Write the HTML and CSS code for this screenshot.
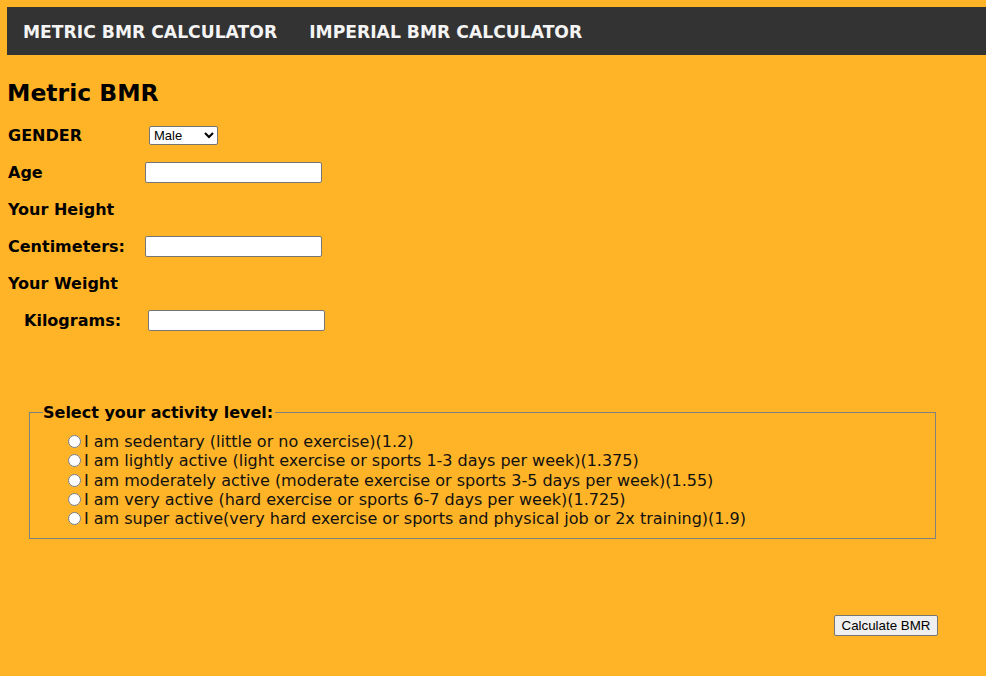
FILE: index.html
```html
<!DOCTYPE html>
<html>
<head>
<meta charset="utf-8">
<title>Metric BMR</title>
<link rel="stylesheet" href="styles.css">
</head>
<body>
<nav class="topnav">
  <a class="navlink" href="#">METRIC BMR CALCULATOR</a>
  <a class="navlink" href="#">IMPERIAL BMR CALCULATOR</a>
</nav>
<h2 class="title">Metric BMR</h2>
<form class="bmr-form">
  <div class="row">
    <label class="lbl">GENDER</label>
    <select class="sel"><option>Male</option><option>Female</option></select>
  </div>
  <div class="row">
    <label class="lbl">Age</label>
    <input class="txt" type="text">
  </div>
  <div class="row">
    <label class="lbl">Your Height</label>
  </div>
  <div class="row">
    <label class="lbl">Centimeters:</label>
    <input class="txt" type="text">
  </div>
  <div class="row">
    <label class="lbl">Your Weight</label>
  </div>
  <div class="row row-kg">
    <label class="lbl lbl-kg">Kilograms:</label>
    <input class="txt txt-kg" type="text">
  </div>

  <fieldset class="activity">
    <legend class="legend">Select your activity level:</legend>
    <div class="options">
      <label class="opt"><input type="radio" name="act" class="radio">I am sedentary (little or no exercise)(1.2)</label>
      <label class="opt"><input type="radio" name="act" class="radio">I am lightly active (light exercise or sports 1-3 days per week)(1.375)</label>
      <label class="opt"><input type="radio" name="act" class="radio">I am moderately active (moderate exercise or sports 3-5 days per week)(1.55)</label>
      <label class="opt"><input type="radio" name="act" class="radio">I am very active (hard exercise or sports 6-7 days per week)(1.725)</label>
      <label class="opt"><input type="radio" name="act" class="radio">I am super active(very hard exercise or sports and physical job or 2x training)(1.9)</label>
    </div>
  </fieldset>

  <div class="actions">
    <button type="button" class="btn">Calculate BMR</button>
  </div>
</form>
</body>
</html>
```
FILE: styles.css
```css
html, body {
  background: #ffb327;
}
body {
  margin: 7px 0 0 7px;
  font-family: "DejaVu Sans", Verdana, sans-serif;
  color: #000;
}
.topnav {
  background: #333333;
  height: 48px;
  display: flex;
  align-items: center;
  padding-left: 0;
}
.navlink {
  color: #f4f4f4;
  text-decoration: none;
  font-weight: bold;
  font-size: 17.2px;
  padding: 1px 16px 0;
}
.title {
  font-size: 23.5px;
  margin: 24px 0 10px 0;
  line-height: 28px;
}
.bmr-form {
  margin: 0 0 0 1px;
}
.row {
  display: flex;
  align-items: center;
  height: 37px;
  font-size: 16px;
  font-weight: bold;
}
.lbl {
  width: 137px;
  flex: none;
}
.sel {
  margin-left: 4px;
  width: 69px;
  height: 19px;
  font-family: Arial, "Liberation Sans", sans-serif;
  font-size: 13px;
  padding: 0;
  border: 1px solid #767676;
  border-radius: 2px;
  background: #fff;
}
.txt {
  width: 177px;
  height: 21px;
  box-sizing: border-box;
  border: 1px solid #767676;
  border-radius: 2px;
  background: #fff;
  padding: 0 2px;
  margin: 0;
}
.lbl-kg {
  padding-left: 16px;
  box-sizing: border-box;
  width: 140px;
}
.activity {
  margin: 64px 50px 0 21px;
  border: 1px solid #808080;
  padding: 10px 12px 10px 14px;
}
.legend {
  font-weight: bold;
  font-size: 16px;
  padding: 0 2px 0 0;
  margin-left: -1px;
}
.options {
  display: flex;
  flex-direction: column;
  padding-left: 20px;
}
.opt {
  font-size: 16px;
  line-height: 19.25px;
  display: flex;
  align-items: center;
  color: #111;
}
.radio {
  margin: 0 3px 0 4px;
  width: 13px;
  height: 13px;
}
.actions {
  display: flex;
  justify-content: flex-end;
  margin: 76px 48px 0 0;
}
.btn {
  font-family: Arial, "Liberation Sans", sans-serif;
  font-size: 13.33px;
  padding: 1px 6px;
  height: 21px;
  width: 104px;
  border: 1px solid #767676;
  border-radius: 2px;
  background: #efefef;
  color: #000;
}
```
